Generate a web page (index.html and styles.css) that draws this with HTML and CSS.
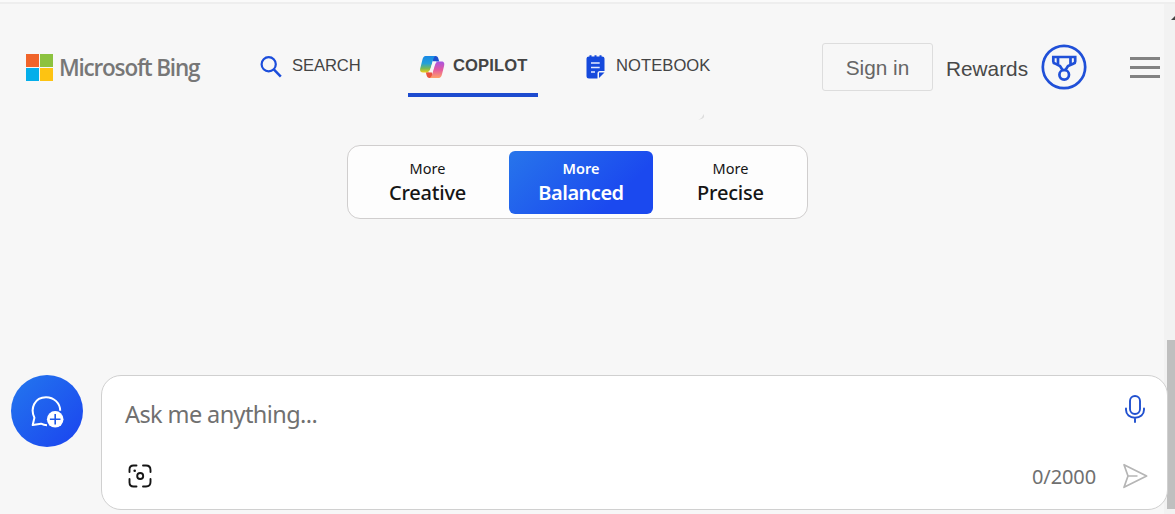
FILE: index.html
```html
<!DOCTYPE html>
<html lang="en">
<head>
<meta charset="utf-8">
<title>Microsoft Bing Copilot</title>
<link rel="stylesheet" href="styles.css">
</head>
<body>
<div class="page">
  <div class="scroll-track"><svg class="scroll-up" width="4" height="4" viewBox="0 0 4 4"><path d="M0 4 4 0V4Z" fill="#444"/></svg><div class="scroll-thumb"></div></div>
  <header class="header">
    <a class="brand">
      <span class="tiles"><i class="red"></i><i class="green"></i><i class="blue"></i><i class="yellow"></i></span>
      <span class="brand-name">Microsoft Bing</span>
    </a>
    <nav class="tabs">
      <a class="tab tab-search">
        <svg width="22" height="22" viewBox="0 0 22 22" fill="none" stroke="#1b4ddb" stroke-width="2.200"><circle cx="8.700" cy="8.200" r="7.100"/><path d="m13.800 13.400 7 7.300" stroke-width="2.500"/></svg>
        <span>SEARCH</span>
      </a>
      <a class="tab tab-copilot">
        <svg width="25" height="22" viewBox="0 0 25 22">
          <defs>
            <linearGradient id="cl" x1="0" y1="0" x2="0" y2="1"><stop offset="0" stop-color="#1888e6"/><stop offset=".45" stop-color="#24a0d9"/><stop offset=".75" stop-color="#77b957"/><stop offset="1" stop-color="#f3ce18"/></linearGradient>
            <linearGradient id="cr" x1="0" y1="0" x2="0" y2="1"><stop offset="0" stop-color="#a654e3"/><stop offset=".5" stop-color="#e45aa0"/><stop offset="1" stop-color="#ffa069"/></linearGradient>
          </defs>
          <path d="M12 0h3.600c1.600 0 2.200 1 2.800 2.800l.8 2.700h-6z" fill="#1e50ce"/>
          <path d="M13 22H9.400c-1.600 0-2.200-1-2.800-2.800L5.800 16.200h6z" fill="#e9533c"/>
          <path d="M5.500 0h10c-1.200.4-1.700 1.700-2.200 3.300l-2.700 9C9.800 15 8.600 16.500 5.700 16.500H3c-2.700 0-3.400-2-2.600-4.700l2-8.100C3.100 1.200 4 0 5.500 0z" fill="url(#cl)"/>
          <path d="M18.900 22H9.600c1.300-.4 1.900-1.700 2.400-3.300l2.700-9C15.500 7 16.500 5.500 18.800 5.500h2.600c2.700 0 3.400 2 2.600 4.700l-2 8C21.300 20.700 20.400 22 18.900 22z" fill="url(#cr)"/>
          <path d="M12.800 5.500h3.500c-1 .8-1.500 2.300-2 4l-2 6.700H8.700c1-.8 1.500-2.200 1.900-3.500z" fill="#f7f7f7"/>
        </svg>
        <span>COPILOT</span>
      </a>
      <a class="tab tab-notebook">
        <svg width="19" height="24" viewBox="0 0 19 24"><path d="M3 1.600h13q2.500 0 2.500 2V16H14q-2.500 0-2.500 2.500V23.500H3Q.5 23.500.5 21V3.600q0-2 2.500-2z" fill="#1549dc"/><path d="M13 17.500h5.500L13 23z" fill="#1549dc"/><path d="M4.500.3v3M9.500.3v3M14.500.3v3" stroke="#1549dc" stroke-width="2"/><path d="M5 8h8.700M5 12.500h8.700M5 17h4" stroke="#e3eaff" stroke-width="1.500"/></svg>
        <span>NOTEBOOK</span>
      </a>
    </nav>
    <a class="sign-in">Sign in</a>
    <a class="rewards"><span>Rewards</span>
      <svg width="46" height="46" viewBox="0 0 46 46" fill="none" stroke="#2050d8" stroke-width="2.700"><circle cx="23" cy="23" r="21.200"/><path d="M12.300 13h21.900v4.400q0 1.500-1.500 2L27 22l-2.500 4h-3L19 22l-5.200-2.600q-1.500-.5-1.500-2zM17 13v7M29.500 13v7"/><circle cx="23.200" cy="30.800" r="4.800"/></svg>
    </a>
    <span class="menu"><i></i><i></i><i></i></span>
  </header>
  <main class="main">
    <svg class="speck" width="7" height="7" viewBox="0 0 7 7"><path d="M0 5.500Q4 5 5.500 0 8 5 0 5.500" fill="#ddd"/></svg>
    <div class="styles">
      <button class="style creative"><small>More</small><b>Creative</b></button>
      <button class="style balanced"><small>More</small><b>Balanced</b></button>
      <button class="style precise"><small>More</small><b>Precise</b></button>
    </div>
  </main>
  <footer class="composer">
    <button class="new-topic">
      <svg width="34" height="34" viewBox="0 0 34 34" fill="none"><path d="M17 31.300c-3 0-4.500-.8-6-1.600L2.700 31l1.700-7.300C-.1 14.500 4.600 3.200 16 3.200c8 0 14.200 6 14.200 13.600" stroke="#fff" stroke-width="2" stroke-linejoin="round"/><circle cx="25.200" cy="25.300" r="8.300" fill="#fff"/><path d="M25.200 20v10.600M19.900 25.300h10.600" stroke="#1d57e8" stroke-width="1.600"/></svg>
    </button>
    <div class="box">
      <div class="row row-top">
        <span class="placeholder">Ask me anything...</span>
        <svg class="mic" width="20" height="28" viewBox="0 0 20 28" fill="none" stroke="#2050cf" stroke-width="1.900" stroke-linecap="round"><rect x="5" y="1" width="10" height="18" rx="5"/><path d="M1 13.500v1.200c0 4.700 3.700 8 9 8s9-3.300 9-8v-1.200M10 23v4"/></svg>
      </div>
      <div class="row row-bottom">
        <svg width="24" height="24" viewBox="0 0 24 24" fill="none" stroke="#161616" stroke-width="1.900" stroke-linecap="round"><path d="M1.500 8V5.500q0-4 4-4H8.500M15 1.500h3q4.500 0 4.500 4.500V8M22.500 15v3q0 4.500-4.500 4.500h-3M8.500 22.500H5.500q-4 0-4-4V15"/><circle cx="12.200" cy="12" r="3"/><circle cx="6.700" cy="6.700" r="1.300" fill="#161616" stroke="none"/></svg>
        <span class="count">0/2000</span>
        <svg width="26" height="26" viewBox="0 0 26 26" fill="none" stroke="#b5b5b5" stroke-width="1.700" stroke-linejoin="round"><path d="M2 1.700 24.600 13 2 24.300 6 13zM6 13H15.500"/></svg>
      </div>
    </div>
  </footer>
</div>
</body>
</html>
```
FILE: styles.css
```css
* { box-sizing: border-box; }
body { margin: 0; background: #f7f7f7; font-family: "Noto Sans", sans-serif; overflow: hidden; }
button { border: 0; padding: 0; margin: 0; background: none; font-family: inherit; color: inherit; }
svg { display: block; flex: none; }
.page { position: relative; width: 1175px; height: 514px; border-top: 2px solid #fafafa; box-shadow: inset 0 2px #eee; display: flex; flex-direction: column; }
.scroll-track { position: absolute; right: 0; top: 2px; bottom: 0; width: 11px; background: #f2f2f2; }
.scroll-thumb { position: absolute; right: 0; top: 336px; width: 8px; height: 169px; background: #bfbfbf; }
.scroll-up { position: absolute; right: 0; top: 12px; }
.header { display: flex; height: 108px; padding: 41px 15px 0 26px; align-items: flex-start; flex: none; font-family: "Liberation Sans", Arial, sans-serif; white-space: nowrap; position: relative; }
.brand { display: flex; align-items: center; height: 48px; width: 234px; gap: 6px; }
.tiles { display: grid; grid-template-columns: 13px 13px; grid-auto-rows: 13px; gap: 1px; }
.red { background: #f0642a; }
.green { background: #8cc23f; }
.blue { background: #04aeea; }
.yellow { background: #fdc312; }
.brand-name { font: 600 22.500px/30px "Open Sans", sans-serif; color: #777; letter-spacing: -1.200px; padding-top: 2px; }
.tabs { display: flex; width: 562px; font-size: 16.600px; color: #444; }
.tab { display: flex; align-items: center; height: 54px; padding-bottom: 6px; }
.tab span { margin-top: -2px; }
.tab-search { width: 148px; gap: 10px; }
.tab-search span { letter-spacing: -.1px; }
.tab-copilot { width: 130px; padding-left: 12px; gap: 8px; font-weight: 700; border-bottom: 4px solid #1d4bcf; padding-bottom: 2px; }
.tab-copilot span { letter-spacing: .1px; }
.tab-notebook { padding-left: 48px; gap: 11px; }
.tab-notebook span { letter-spacing: .05px; }
.sign-in { width: 111px; height: 48px; border: 1px solid #ddd; border-radius: 3px; font-size: 20.800px; line-height: 47px; text-align: center; color: #666; }
.rewards { display: flex; align-items: center; gap: 13px; height: 48px; margin-left: 13px; font-size: 20.800px; color: #484848; }
.rewards span { padding-top: 4px; }
.menu { display: flex; flex-direction: column; gap: 6px; width: 30px; margin: 14px 0 0 auto; }
.menu i { height: 3px; background: #828282; }
.main { height: 263px; flex: none; }
.speck { margin: 4px 0 0 698px; }
.styles { display: flex; width: 461px; height: 74px; margin: 24px 0 0 347px; padding: 5px 5px 4px; border: 1px solid #d0cece; border-radius: 13px; background: #fdfdfd; }
.style { display: flex; flex: none; flex-direction: column; align-items: center; padding-top: 6px; border-radius: 6px; color: #151515; white-space: nowrap; }
.style small { font-size: 14.500px; line-height: 22px; }
.style b { font-size: 20px; line-height: 28px; font-weight: 500; letter-spacing: -.2px; }
.creative { width: 149px; margin-right: 7px; }
.balanced { width: 144px; color: #fff; background: linear-gradient(135deg, #2775eb, #1b49ef 75%); }
.balanced small { font-weight: 600; }
.balanced b { font-weight: 600; letter-spacing: -.5px; }
.precise { width: 149px; margin-left: 3px; }
.composer { display: flex; align-items: flex-start; gap: 18px; padding: 2px 7px 4px 11px; position: relative; }
.new-topic { width: 72px; height: 72px; border-radius: 50%; background: linear-gradient(135deg, #2377ee, #1b43ef); display: flex; justify-content: center; align-items: center; flex: none; }
.box { flex: 1; height: 135px; border: 1px solid #d0d0d0; border-radius: 20px; background: #fff; padding: 18px 19px 0 23px; color: #707070; }
.row { display: flex; align-items: center; }
.row-top { height: 40px; justify-content: space-between; padding-right: 3px; }
.placeholder { font-size: 23.500px; letter-spacing: -.6px; }
.mic { margin-bottom: 10px; }
.row-bottom { margin-top: 28px; height: 28px; padding-left: 3px; }
.count { margin-left: auto; margin-right: 26px; padding-top: 1px; font-size: 20px; letter-spacing: -.1px; }
```
